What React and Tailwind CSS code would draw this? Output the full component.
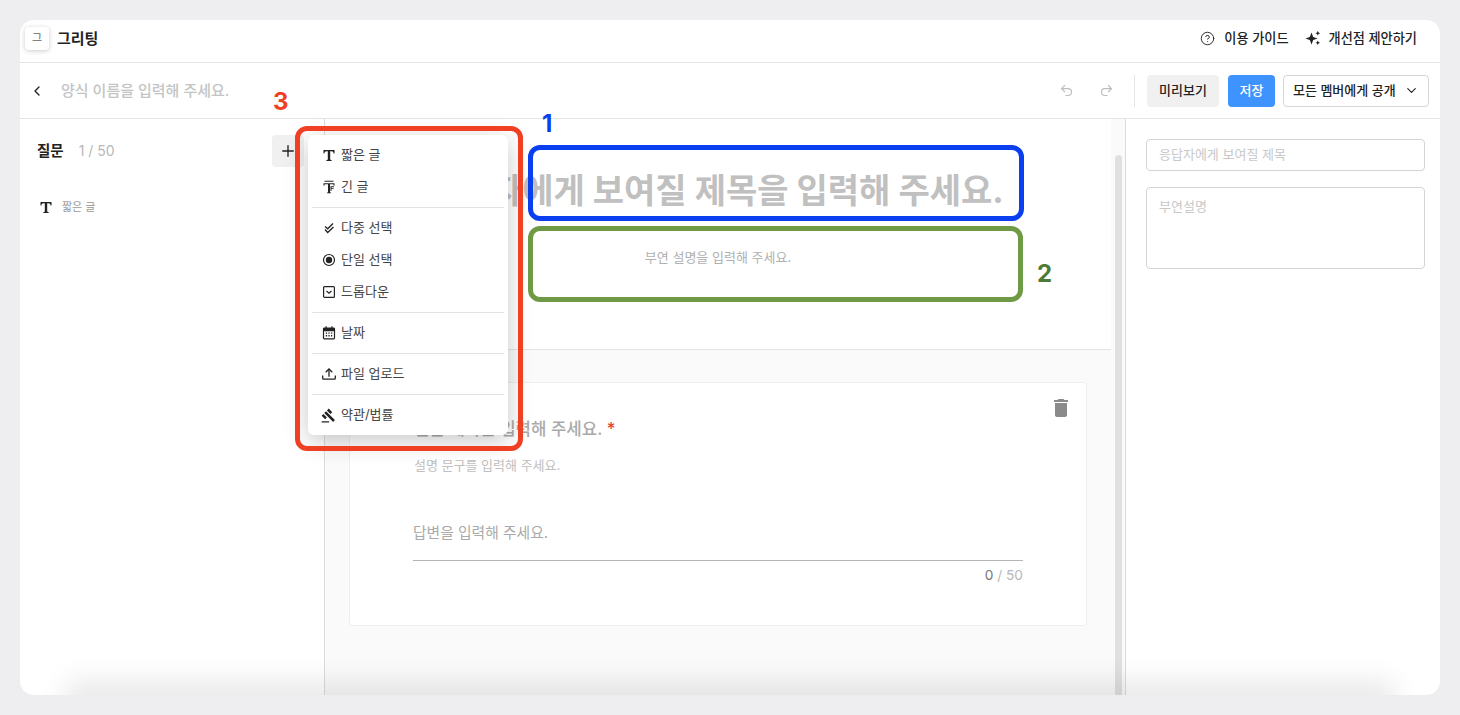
import React from "react";
import { CircleHelp, ChevronLeft, ChevronDown, Undo2, Redo2, Plus } from "lucide-react";
import { MdDelete, MdGavel } from "react-icons/md";

const SerifT = ({ className = "" }) => (
  <svg viewBox="0 0 14 14" className={className} fill="currentColor">
    <path d="M1.500 2h11v3.400h-.9c-.2-1.400-.7-2.100-2.200-2.100H8.200v7.900c0 .5.3.7.8.7h.6v1H4.400v-1H5c.5 0 .8-.2.8-.7V3.300H4.600c-1.500 0-2 .7-2.200 2.100h-.9z" />
  </svg>
);

const LongT = ({ className = "" }) => (
  <svg viewBox="0 0 14 14" className={className} fill="currentColor">
    <path d="M2.500 .8h9v1h-9z" />
    <path d="M1.500 3.300h11v2.400h-.7c-.2-.9-.5-1.400-1.500-1.400H8v7.600c0 .4.200.5.600.5h.5v.9H4.900v-.9h.5c.4 0 .6-.1.600-.5V4.300H3.700c-1 0-1.300.5-1.500 1.400h-.7z" />
    <path d="M8.500 6.200h3.500v1H9.500v1h2.200v.9H9.500V11h-1z" />
  </svg>
);

const Checks = ({ className = "" }) => (
  <svg viewBox="0 0 14 14" className={className} fill="none" stroke="currentColor" strokeWidth="1.300">
    <path d="M3 5.500 5.700 7.800 11 2.500" />
    <path d="M3 8.500 5.700 11.500 11.500 6" />
  </svg>
);

const Radio = ({ className = "" }) => (
  <svg viewBox="0 0 14 14" className={className}>
    <circle cx="7" cy="7" r="5.500" fill="none" stroke="currentColor" strokeWidth="1.200" />
    <circle cx="7" cy="7" r="3.200" fill="currentColor" />
  </svg>
);

const Dropdown = ({ className = "" }) => (
  <svg viewBox="0 0 14 14" className={className} fill="none" stroke="currentColor" strokeWidth="1.200">
    <rect x="1.600" y="1.600" width="10.800" height="10.800" rx="1" />
    <path d="M4.500 6 7 8.300 9.500 6" />
  </svg>
);

const Calendar = ({ className = "" }) => (
  <svg viewBox="0 0 14 14" className={className} fill="currentColor">
    <path d="M3.500.3h1.200v1.300h4.600V.3h1.200v1.300h1.200c.8 0 1.400.6 1.400 1.400v9.100c0 .8-.6 1.400-1.400 1.400h-9.400C1.500 13.500.9 12.900.9 12.100V3c0-.8.6-1.400 1.400-1.400h1.200zM2.100 5.200v6.900c0 .1.100.2.200.2h9.400c.1 0 .2-.1.200-.2V5.200z" />
    <path d="M3.800 6.500h1.300v1.300H3.800zM6.350 6.500h1.300v1.300h-1.300zM8.900 6.500h1.300v1.300H8.900zM3.800 9.100h1.300v1.300H3.800zM6.350 9.100h1.300v1.300h-1.300zM8.900 9.100h1.300v1.300H8.900z" />
  </svg>
);

const Upload = ({ className = "" }) => (
  <svg viewBox="0 0 14 12" className={className} fill="none" stroke="currentColor" strokeWidth="1.300">
    <path d="M.7 7.500v2.800c0 .5.4.9.9.9h10.800c.5 0 .9-.4.9-.9V7.500" />
    <path d="M7 8.800V1.200" />
    <path d="M3.700 4.300 7 1 10.300 4.300" />
  </svg>
);

const Sparkle = ({ className = "" }) => (
  <svg viewBox="0 0 16 16" className={className} fill="currentColor">
    <path d="M6.500 2.500 8.200 6.900l4.300 1.600-4.300 1.600-1.700 4.400-1.700-4.400L.5 8.500l4.300-1.600z" />
    <path d="M12.800 .8 13.500 2.500l1.700.7-1.700.7-.7 1.700-.7-1.700-1.700-.7 1.700-.7z" />
    <path d="M12.800 10.500l.7 1.500 1.500.7-1.500.7-.7 1.600-.7-1.600-1.500-.7 1.500-.7z" />
  </svg>
);

const MenuItem = ({ icon, label }) => (
  <div className="flex h-8 items-center gap-[5px] pl-[13px] text-[13px] text-[#444]">
    <span className="flex w-[15px] justify-center text-[#222]">{icon}</span>
    <span>{label}</span>
  </div>
);

const Rule = () => <div className="mx-1 h-px bg-[#e2e2e2]" />;

export default function App() {
  return (
    <div className="h-[715px] overflow-hidden bg-[#eeeef0] p-5 font-['Inter','Noto_Sans_CJK_KR',sans-serif] text-[#222]">
      <div className="relative flex h-[675px] flex-col overflow-hidden rounded-[14px] bg-white">
        {/* global bar */}
        <header className="flex h-[43px] shrink-0 items-center justify-between border-b border-[#e4e4e4] pb-[5px] pl-[5px] pr-[23px]">
          <div className="flex items-center gap-2">
            <div className="flex h-[23px] w-6 items-center justify-center rounded-[4px] bg-white text-[11px] text-[#666] shadow-[0_1px_5px_rgba(0,0,0,0.2)]">그</div>
            <span className="text-[15px] font-semibold leading-none">그리팅</span>
          </div>
          <div className="flex items-center gap-4 text-[13.2px] font-medium">
            <div className="flex items-center gap-[9px]">
              <CircleHelp className="size-[15px]" strokeWidth={1.500} />
              <span>이용 가이드</span>
            </div>
            <div className="flex items-center gap-2">
              <Sparkle className="size-4" />
              <span>개선점 제안하기</span>
            </div>
          </div>
        </header>

        {/* form bar */}
        <div className="flex h-[56px] shrink-0 items-center justify-between border-b border-[#e4e4e4] pl-[9px] pr-[11px]">
          <div className="flex items-center gap-4">
            <ChevronLeft className="size-[16px]" strokeWidth={2} />
            <span className="pt-px text-[15px] font-medium text-[#c4c4c4]">양식 이름을 입력해 주세요.</span>
          </div>
          <div className="flex items-center">
            <Undo2 className="size-[15px] text-[#bdbdbd]" strokeWidth={1.800} />
            <Redo2 className="ml-[25px] size-[15px] text-[#bdbdbd]" strokeWidth={1.800} />
            <div className="ml-5 h-[32px] w-px bg-[#e4e4e4]" />
            <button className="ml-3 h-8 w-[72px] rounded-[4px] bg-[#f0f0f0] text-[13px] font-medium">미리보기</button>
            <button className="ml-[9px] h-8 w-[47px] rounded-[4px] bg-[#3f93ff] text-[13px] font-medium text-white">저장</button>
            <button className="ml-2 flex h-8 w-[146px] items-center justify-between rounded-[4px] border border-[#d6d6d6] pl-[9px] pr-[9px] text-[13px] font-medium">
              <span>모든 멤버에게 공개</span>
              <ChevronDown className="size-[15px]" strokeWidth={1.800} />
            </button>
          </div>
        </div>

        {/* body */}
        <div className="flex min-h-0 flex-1">
          <aside className="w-[305px] shrink-0 border-r border-[#dcdcdc]">
            <div className="flex items-center justify-between pl-[17px] pr-5 pt-4">
              <div className="flex items-center gap-[15px] text-sm">
                <span className="text-[14.5px] font-semibold">질문</span>
                <span className="text-[#b8b8b8]">1 / 50</span>
              </div>
              <div className="flex size-8 items-center justify-center rounded-[4px] bg-[#f0f0f0]">
                <Plus className="size-[18px]" strokeWidth={1.800} />
              </div>
            </div>
            <div className="flex items-center gap-[9px] pl-[19px] pt-8">
              <SerifT className="size-[14px] text-[#222]" />
              <span className="text-[11px] text-[#9a9a9a]">짧은 글</span>
            </div>
          </aside>

          <main className="flex min-w-0 flex-1 bg-[#fafafa]">
            <div className="flex w-[786px] shrink-0 flex-col">
              <section className="flex h-[231px] shrink-0 flex-col items-center border-b border-[#e4e4e4] bg-white pt-[50px]">
                <div className="whitespace-nowrap pr-1 text-[34px] font-bold leading-[44px] text-[#c0c0c0]">응답자에게 보여질 제목을 입력해 주세요.</div>
                <div className="pt-[34px] text-[13px] leading-[20px] text-[#b0b0b0]">부연 설명을 입력해 주세요.</div>
              </section>
              <div className="px-6 pt-8">
                <article className="relative h-[244px] rounded-[4px] border border-[#eeeeee] bg-white pl-[63px] pr-[63px] pt-[34px]">
                  <MdDelete className="absolute right-[13px] top-[13px] size-6 text-[#8a8a8a]" />
                  <div className="pl-px text-[16.8px] font-medium leading-6 text-[#aaaaaa]">
                    질문 제목을 입력해 주세요. <span className="text-[#e5432d]">*</span>
                  </div>
                  <div className="pl-px pt-[15px] text-[13px] leading-[18px] text-[#c0c0c0]">설명 문구를 입력해 주세요.</div>
                  <div className="mt-[49px] border-b border-[#b4b4b4] pb-[17px] text-[14.8px] leading-[20px] text-[#aaaaaa]">답변을 입력해 주세요.</div>
                  <div className="pt-[5px] text-right text-[13.7px] leading-[18px] text-[#b8b8b8]">
                    <span className="text-[#777]">0</span> / 50
                  </div>
                </article>
              </div>
            </div>
            <div className="flex w-[14px] shrink-0 justify-center pl-1 pr-[3px] pt-9">
              <div className="h-full w-[7px] rounded-t-full bg-[#e0e0e0]" />
            </div>
          </main>

          <aside className="flex w-[315px] shrink-0 flex-col gap-4 border-l border-[#dcdcdc] pl-5 pr-[15px] pt-5 text-[13px] text-[#c8c8c8]">
            <div className="flex h-8 items-center rounded-[4px] border border-[#d4d4d4] px-3">응답자에게 보여질 제목</div>
            <div className="h-[82px] rounded-[4px] border border-[#d4d4d4] px-3 pt-[9px]">부연설명</div>
          </aside>
        </div>

        {/* bottom fade */}
        <div className="pointer-events-none absolute inset-x-[60px] top-full h-5 shadow-[0_0_28px_14px_rgba(0,0,0,0.09)]" />

        {/* type menu */}
        <div className="absolute left-[288px] top-[115px] w-[200px] rounded-[6px] bg-white py-1 shadow-[0_6px_24px_rgba(0,0,0,0.22)]">
          <MenuItem icon={<SerifT className="size-[14px]" />} label="짧은 글" />
          <MenuItem icon={<LongT className="size-[14px]" />} label="긴 글" />
          <div className="h-1" />
          <Rule />
          <div className="h-1" />
          <MenuItem icon={<Checks className="size-[14px]" />} label="다중 선택" />
          <MenuItem icon={<Radio className="size-[14px]" />} label="단일 선택" />
          <MenuItem icon={<Dropdown className="size-[14px]" />} label="드롭다운" />
          <div className="h-1" />
          <Rule />
          <div className="h-1" />
          <MenuItem icon={<Calendar className="size-[14px]" />} label="날짜" />
          <div className="h-1" />
          <Rule />
          <div className="h-1" />
          <MenuItem icon={<Upload className="h-3 w-[14px]" />} label="파일 업로드" />
          <div className="h-1" />
          <Rule />
          <div className="h-1" />
          <MenuItem icon={<MdGavel className="size-[15px] shrink-0" />} label="약관/법률" />
        </div>

        {/* annotations */}
        <div className="pointer-events-none absolute left-[275px] top-[106px] h-[325px] w-[228px] rounded-[12px] border-[5px] border-[#ef4023]" />
        <div className="pointer-events-none absolute left-[508px] top-[125px] h-[76px] w-[496px] rounded-[12px] border-[5px] border-[#0a3ff0]" />
        <div className="pointer-events-none absolute left-[508px] top-[206px] h-[76px] w-[495px] rounded-[12px] border-[5px] border-[#6f9a45]" />
        <span className="absolute left-[253px] top-[67px] text-[24px] font-bold leading-[30px] text-[#ef4023]">3</span>
        <span className="absolute left-[522px] top-[89px] text-[24px] font-bold leading-[30px] text-[#0a3ff0]">1</span>
        <span className="absolute left-[1017px] top-[239px] text-[24px] font-bold leading-[30px] text-[#4f7a34]">2</span>
      </div>
    </div>
  );
}
